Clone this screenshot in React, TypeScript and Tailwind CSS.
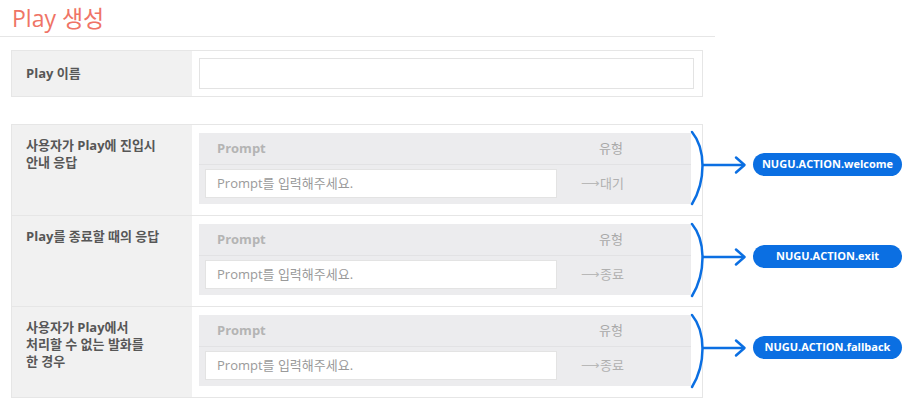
import React from "react";

const font = { fontFamily: '"Open Sans", "Noto Sans CJK KR", sans-serif' };

interface RowProps {
  label: React.ReactNode;
  kind: string;
  action: string;
  first?: boolean;
}

function Bracket({ action }: { action: string }) {
  return (
    <div className="-ml-[15px] flex h-[91px] shrink-0 items-start">
      <svg width="65" height="91" viewBox="0 0 65 91" fill="none" className="shrink-0">
        <path
          d="M4 8 C18 25 18 57 4 80"
          stroke="#0b6fe2"
          strokeWidth="2.5"
          strokeLinecap="round"
        />
        <path d="M15 41 H56" stroke="#0b6fe2" strokeWidth="2.5" />
        <path
          d="M48 33.5 L56.5 41 L48 48.5"
          stroke="#0b6fe2"
          strokeWidth="2.5"
          strokeLinecap="round"
          strokeLinejoin="round"
        />
      </svg>
      <div className="mt-[29px] flex h-[23px] w-[149px] items-center justify-center rounded-full bg-[#0b6fe2] text-[11px] font-bold text-white">
        {action}
      </div>
    </div>
  );
}

function ResponseRow({ label, kind, action, first }: RowProps) {
  return (
    <div className="flex">
      <div
        className={`flex w-[692px] shrink-0 border-x border-b border-[#e6e6e6] ${
          first ? "border-t" : ""
        }`}
      >
        <div className="w-[180px] shrink-0 bg-[#f1f1f1] pl-[14px] pt-[12px] text-[13px] font-bold leading-[17px] text-[#575757]">
          {label}
        </div>
        <div className="flex-1 pl-[7px] pr-[11px] pt-[8px] pb-[11px]">
          <div className="flex h-[71px] flex-col bg-[#ececee]">
            <div className="flex h-[32px] items-center justify-between border-b border-[#e2e2e4] pl-[18px] pr-[68px] text-[13px]">
              <span className="font-bold text-[#b4b4b4]">Prompt</span>
              <span className="text-[#a9a9a9]">유형</span>
            </div>
            <div className="flex h-[38px] items-start pt-[4px]">
              <div className="ml-[6px] flex h-[29px] w-[352px] items-center border border-[#e3e3e3] bg-white pl-[11px] text-[13px] text-[#9a9a9a]">
                Prompt를 입력해주세요.
              </div>
              <div className="flex h-[29px] flex-1 items-center justify-end pr-[67px] text-[13px] text-[#b0b0b0]">
                <span className="text-[#b8b8b8]">⟶</span>
                {kind}
              </div>
            </div>
          </div>
        </div>
      </div>
      <Bracket action={action} />
    </div>
  );
}

export default function App() {
  return (
    <div className="h-[412px] w-[906px] bg-white" style={font}>
      <div className="w-[715px] border-b border-[#e6e6e6] pl-[12px] pt-[3px] pb-[2px]">
        <h1 className="text-[23px] leading-[31px] text-[#ef7466]">Play 생성</h1>
      </div>

      <div className="ml-[11px] mt-[13px] flex h-[47px] w-[692px] border border-[#e6e6e6]">
        <div className="flex w-[180px] shrink-0 items-center bg-[#f1f1f1] pl-[14px] text-[13px] font-bold text-[#575757]">
          Play 이름
        </div>
        <div className="flex-1 pl-[7px] pr-[8px] pt-[7px]">
          <input
            type="text"
            className="h-[31px] w-full border border-[#e3e3e3] bg-white outline-none"
          />
        </div>
      </div>

      <div className="ml-[11px] mt-[27px] flex flex-col">
        <ResponseRow
          first
          label={
            <>
              사용자가 Play에 진입시
              <br />
              안내 응답
            </>
          }
          kind="대기"
          action="NUGU.ACTION.welcome"
        />
        <ResponseRow label="Play를 종료할 때의 응답" kind="종료" action="NUGU.ACTION.exit" />
        <ResponseRow
          label={
            <>
              사용자가 Play에서
              <br />
              처리할 수 없는 발화를
              <br />
              한 경우
            </>
          }
          kind="종료"
          action="NUGU.ACTION.fallback"
        />
      </div>
    </div>
  );
}
